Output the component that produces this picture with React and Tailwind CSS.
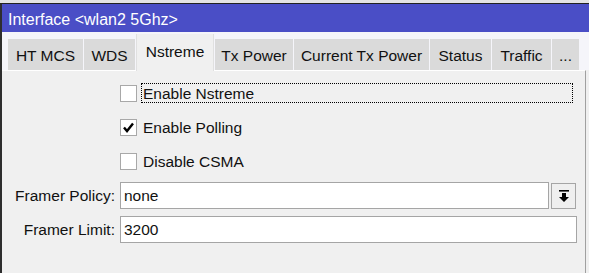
import React from "react";

const tabs = [
  { label: "HT MCS", w: "w-[75px]" },
  { label: "WDS", w: "w-[51px]" },
  { label: "Nstreme", w: "w-[78px]", active: true },
  { label: "Tx Power", w: "w-[78px]" },
  { label: "Current Tx Power", w: "w-[135px]" },
  { label: "Status", w: "w-[61px]" },
  { label: "Traffic", w: "w-[59px]" },
  { label: "...", w: "w-[27px]" },
];

function Check({ checked }) {
  return (
    <div className="w-[17px] h-[17px] bg-white border border-[#a8a8a8] flex items-center justify-center shrink-0">
      {checked && (
        <svg width="13" height="13" viewBox="0 0 13 13">
          <path d="M2 6.5 L5 10 L11 2.5" stroke="#000" strokeWidth="2.4" fill="none" />
        </svg>
      )}
    </div>
  );
}

export default function App() {
  return (
    <div
      className="w-[589px] h-[273px] overflow-hidden bg-[#f0f0f0] text-[#111] flex flex-col"
      style={{ fontFamily: '"Liberation Sans", Arial, sans-serif' }}
    >
      <div className="h-[4px] bg-[#e4e4e4] border-b border-[#222] shrink-0" />
      <div className="flex-1 flex flex-col border-l-2 border-[#2e2e2e]">
        <div className="h-[28px] bg-[#4a4ec6] text-white text-[16px] pl-[6px] pt-[4px] flex items-center shrink-0">
          Interface &lt;wlan2 5Ghz&gt;
        </div>
        <div className="h-[38px] bg-[#f5f5fa] flex items-end pl-[6px] gap-[1px] shrink-0">
          {tabs.map((t) =>
            t.active ? (
              <div
                key={t.label}
                className={`${t.w} h-[37px] -mb-[1px] bg-[#f0f0f0] border-x border-[#e0e0e0] text-[15.5px] flex items-center justify-center pb-[1px] relative z-10`}
              >
                {t.label}
              </div>
            ) : (
              <div
                key={t.label}
                className={`${t.w} h-[31px] bg-[#dadada] text-[15.5px] flex items-center justify-center pt-[2px]`}
              >
                {t.label}
              </div>
            )
          )}
        </div>
        <div className="flex-1 bg-[#f0f0f0] border-t border-white mr-[3px] border-r border-r-[#a0a0a0] flex flex-col pt-[5px] text-[15.5px]">
          <div className="h-[34px] flex items-center pl-[118px] pr-[12px]">
            <Check />
            <div className="ml-[4px] flex-1 h-[20px] border border-dotted border-black flex items-center pl-[1px] pt-[1px]">
              Enable Nstreme
            </div>
          </div>
          <div className="h-[34px] flex items-center pl-[118px]">
            <Check checked />
            <div className="ml-[6px] pt-[1px]">Enable Polling</div>
          </div>
          <div className="h-[34px] flex items-center pl-[118px]">
            <Check />
            <div className="ml-[6px] pt-[1px]">Disable CSMA</div>
          </div>
          <div className="mt-[4px] flex items-center h-[27px] pr-[9px]">
            <div className="w-[114px] text-right pr-[1px] pt-[1px]">Framer Policy:</div>
            <div className="ml-[4px] flex-1 h-[27px] bg-white border border-[#a5a5a5] flex items-center pl-[3px] pt-[1px]">
              none
            </div>
            <div className="ml-[2px] w-[25px] h-[26px] bg-[#efefef] border border-[#a5a5a5] flex items-center justify-center">
              <svg width="12" height="14" viewBox="0 0 12 14">
                <rect x="1" y="1" width="10" height="1.6" fill="#000" />
                <path d="M4 4 H8 V8 H11 L6 13 L1 8 H4 Z" fill="#000" />
              </svg>
            </div>
          </div>
          <div className="mt-[7px] flex items-center h-[27px] pr-[8px]">
            <div className="w-[114px] text-right pr-[1px] pt-[1px]">Framer Limit:</div>
            <div className="ml-[4px] flex-1 h-[27px] bg-white border border-[#a5a5a5] flex items-center pl-[3px] pt-[1px]">
              3200
            </div>
          </div>
        </div>
      </div>
    </div>
  );
}
